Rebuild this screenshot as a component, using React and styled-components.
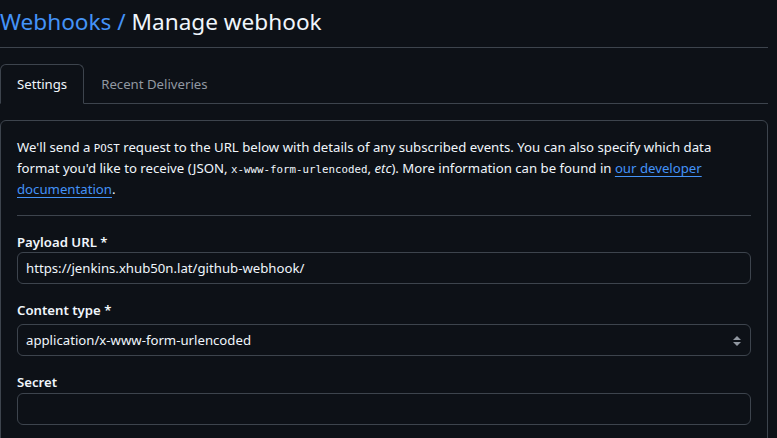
import React from "react";
import styled, { createGlobalStyle } from "styled-components";

const GlobalStyle = createGlobalStyle`
  html, body {
    margin: 0;
    padding: 0;
    background: #0d1117;
  }
  body {
    font-family: "Noto Sans", "Open Sans", sans-serif;
    font-size: 13.2px;
    color: #f0f6fc;
    overflow: hidden;
  }
`;

const Page = styled.div`
  width: 768px;
`;

const Header = styled.div`
  padding: 4px 0 7px;
  border-bottom: 1px solid #3d444d;
`;

const Title = styled.h2`
  margin: 0;
  font-size: 22.6px;
  font-weight: 400;
  line-height: 36px;
  color: #f0f6fc;
`;

const Crumb = styled.a`
  color: #4493f8;
  text-decoration: none;
`;

const TabNav = styled.nav`
  margin-top: 16px;
  display: flex;
  border-bottom: 1px solid #3d444d;
`;

const Tab = styled.a`
  display: block;
  padding: 9px 16px 8px;
  line-height: 21px;
  margin-bottom: -1px;
  border: 1px solid transparent;
  border-radius: 6px 6px 0 0;
  color: ${(p) => (p.$active ? "#f0f6fc" : "#9198a1")};
  ${(p) =>
    p.$active &&
    `
    border-color: #3d444d;
    border-bottom-color: #0d1117;
    background: #0d1117;
  `}
`;

const Box = styled.div`
  margin-top: 16px;
  border: 1px solid #3d444d;
  border-radius: 6px;
  padding: 16px 16px 0;
  height: 320px;
`;

const Intro = styled.p`
  margin: 0 0 15px;
  line-height: 21px;
  color: #f0f6fc;
`;

const Code = styled.code`
  font-family: "DejaVu Sans Mono", "Liberation Mono", monospace;
  font-size: 10.8px;
  line-height: 1;
`;

const Link = styled.a`
  color: #4493f8;
  text-decoration: underline;
  text-underline-offset: 3px;
`;

const Divider = styled.hr`
  margin: 0;
  border: 0;
  border-top: 1px solid #3d444d;
`;

const Group = styled.div`
  margin-top: 16px;
`;

const Label = styled.label`
  display: block;
  font-weight: 600;
  line-height: 20px;
  color: #f0f6fc;
`;

const Input = styled.input`
  display: block;
  box-sizing: border-box;
  width: 100%;
  height: 32px;
  margin-top: ${(p) => p.$gap || 0}px;
  padding: 0 8px;
  background: #0d1117;
  border: 1px solid #3d444d;
  border-radius: 6px;
  color: #f0f6fc;
  font-family: inherit;
  font-size: 13.2px;
  outline: none;
`;

const SelectWrap = styled.div`
  position: relative;
  margin-top: 4px;
  display: flex;
  align-items: center;
  box-sizing: border-box;
  height: 32px;
  padding: 0 8px;
  border: 1px solid #3d444d;
  border-radius: 6px;
  color: #f0f6fc;
`;

const Arrows = styled.svg`
  position: absolute;
  right: 8px;
  top: 10px;
`;

export default function App() {
  return (
    <>
      <GlobalStyle />
      <Page>
        <Header>
          <Title>
            <Crumb>Webhooks</Crumb>
            <Crumb> / </Crumb>
            Manage webhook
          </Title>
        </Header>
        <TabNav>
          <Tab $active>Settings</Tab>
          <Tab>Recent Deliveries</Tab>
        </TabNav>
        <Box>
          <Intro>
            We'll send a <Code>POST</Code> request to the URL below with details
            of any subscribed events. You can also specify which data format
            you'd like to receive (JSON, <Code>x-www-form-urlencoded</Code>,{" "}
            <em>etc</em>). More information can be found in{" "}
            <Link>our developer documentation</Link>.
          </Intro>
          <Divider />
          <Group>
            <Label>Payload URL *</Label>
            <Input
              readOnly
              value="https://jenkins.xhub50n.lat/github-webhook/"
            />
          </Group>
          <Group>
            <Label>Content type *</Label>
            <SelectWrap>
              application/x-www-form-urlencoded
              <Arrows width="10" height="12" viewBox="0 0 10 12">
                <path d="M5 1 L9 5 H1 Z M5 11 L9 7 H1 Z" fill="#9198a1" />
              </Arrows>
            </SelectWrap>
          </Group>
          <Group>
            <Label>Secret</Label>
            <Input $gap={1} readOnly value="" />
          </Group>
        </Box>
      </Page>
    </>
  );
}
